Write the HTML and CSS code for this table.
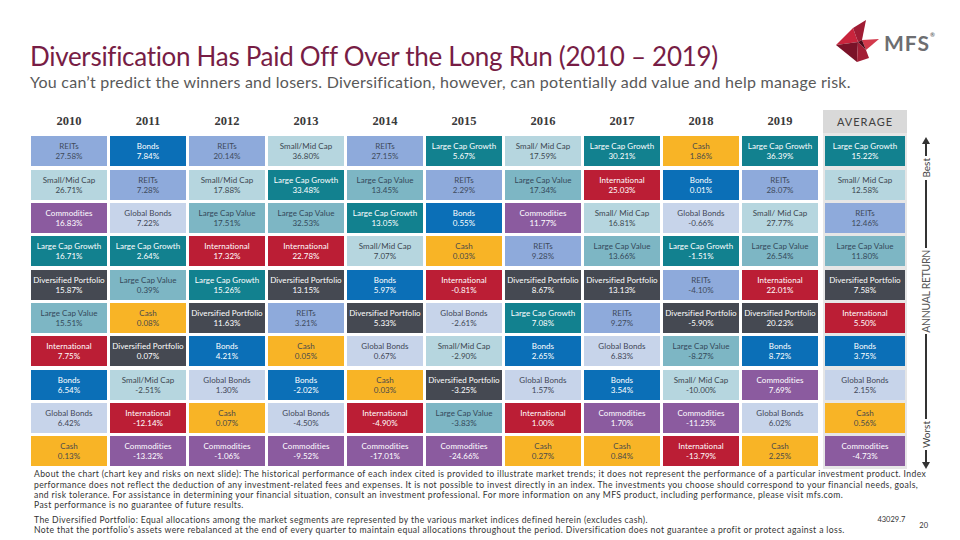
FILE: index.html
```html
<!DOCTYPE html>
<html lang="en">
<head>
<meta charset="utf-8">
<title>Diversification Has Paid Off Over the Long Run</title>
<link rel="stylesheet" href="styles.css">
</head>
<body>
<div class="slide">
  <header class="top">
    <h1>Diversification Has Paid Off Over the Long Run (2010 – 2019)</h1>
    <div class="logo">
      <svg class="mark" viewBox="0 0 44 42" width="44" height="42">
        <polygon points="0,25 17,8 22,22" fill="#c8243c"/>
        <polygon points="17,8 30,0 26,20 22,22" fill="#a01c34"/>
        <polygon points="26,20 43,19 30,30" fill="#d23a4c"/>
        <polygon points="0,25 22,22 21,42" fill="#7a1228"/>
        <polygon points="22,22 30,30 33,38 21,42" fill="#a31f36"/>
        <polygon points="22,22 26,20 30,30" fill="#4a0a1a"/>
      </svg>
      <span class="mfs">MFS<sup>®</sup></span>
    </div>
    <p class="sub">You can’t predict the winners and losers. Diversification, however, can potentially add value and help manage risk.</p>
  </header>

  <section class="chart">
    <div class="cols">
      <div class="col">
        <div class="yr">2010</div>
        <div class="cell reit">REITs<br>27.58%</div>
        <div class="cell smid">Small/Mid Cap<br>26.71%</div>
        <div class="cell comm">Commodities<br>16.83%</div>
        <div class="cell lcg">Large Cap Growth<br>16.71%</div>
        <div class="cell div">Diversified Portfolio<br>15.87%</div>
        <div class="cell lcv">Large Cap Value<br>15.51%</div>
        <div class="cell intl">International<br>7.75%</div>
        <div class="cell bond">Bonds<br>6.54%</div>
        <div class="cell gb">Global Bonds<br>6.42%</div>
        <div class="cell cash">Cash<br>0.13%</div>
      </div>
      <div class="col">
        <div class="yr">2011</div>
        <div class="cell bond">Bonds<br>7.84%</div>
        <div class="cell reit">REITs<br>7.28%</div>
        <div class="cell gb">Global Bonds<br>7.22%</div>
        <div class="cell lcg">Large Cap Growth<br>2.64%</div>
        <div class="cell lcv">Large Cap Value<br>0.39%</div>
        <div class="cell cash">Cash<br>0.08%</div>
        <div class="cell div">Diversified Portfolio<br>0.07%</div>
        <div class="cell smid">Small/Mid Cap<br>-2.51%</div>
        <div class="cell intl">International<br>-12.14%</div>
        <div class="cell comm">Commodities<br>-13.32%</div>
      </div>
      <div class="col">
        <div class="yr">2012</div>
        <div class="cell reit">REITs<br>20.14%</div>
        <div class="cell smid">Small/Mid Cap<br>17.88%</div>
        <div class="cell lcv">Large Cap Value<br>17.51%</div>
        <div class="cell intl">International<br>17.32%</div>
        <div class="cell lcg">Large Cap Growth<br>15.26%</div>
        <div class="cell div">Diversified Portfolio<br>11.63%</div>
        <div class="cell bond">Bonds<br>4.21%</div>
        <div class="cell gb">Global Bonds<br>1.30%</div>
        <div class="cell cash">Cash<br>0.07%</div>
        <div class="cell comm">Commodities<br>-1.06%</div>
      </div>
      <div class="col">
        <div class="yr">2013</div>
        <div class="cell smid">Small/Mid Cap<br>36.80%</div>
        <div class="cell lcg">Large Cap Growth<br>33.48%</div>
        <div class="cell lcv">Large Cap Value<br>32.53%</div>
        <div class="cell intl">International<br>22.78%</div>
        <div class="cell div">Diversified Portfolio<br>13.15%</div>
        <div class="cell reit">REITs<br>3.21%</div>
        <div class="cell cash">Cash<br>0.05%</div>
        <div class="cell bond">Bonds<br>-2.02%</div>
        <div class="cell gb">Global Bonds<br>-4.50%</div>
        <div class="cell comm">Commodities<br>-9.52%</div>
      </div>
      <div class="col">
        <div class="yr">2014</div>
        <div class="cell reit">REITs<br>27.15%</div>
        <div class="cell lcv">Large Cap Value<br>13.45%</div>
        <div class="cell lcg">Large Cap Growth<br>13.05%</div>
        <div class="cell smid">Small/Mid Cap<br>7.07%</div>
        <div class="cell bond">Bonds<br>5.97%</div>
        <div class="cell div">Diversified Portfolio<br>5.33%</div>
        <div class="cell gb">Global Bonds<br>0.67%</div>
        <div class="cell cash">Cash<br>0.03%</div>
        <div class="cell intl">International<br>-4.90%</div>
        <div class="cell comm">Commodities<br>-17.01%</div>
      </div>
      <div class="col">
        <div class="yr">2015</div>
        <div class="cell lcg">Large Cap Growth<br>5.67%</div>
        <div class="cell reit">REITs<br>2.29%</div>
        <div class="cell bond">Bonds<br>0.55%</div>
        <div class="cell cash">Cash<br>0.03%</div>
        <div class="cell intl">International<br>-0.81%</div>
        <div class="cell gb">Global Bonds<br>-2.61%</div>
        <div class="cell smid">Small/Mid Cap<br>-2.90%</div>
        <div class="cell div">Diversified Portfolio<br>-3.25%</div>
        <div class="cell lcv">Large Cap Value<br>-3.83%</div>
        <div class="cell comm">Commodities<br>-24.66%</div>
      </div>
      <div class="col">
        <div class="yr">2016</div>
        <div class="cell smid">Small/ Mid Cap<br>17.59%</div>
        <div class="cell lcv">Large Cap Value<br>17.34%</div>
        <div class="cell comm">Commodities<br>11.77%</div>
        <div class="cell reit">REITs<br>9.28%</div>
        <div class="cell div">Diversified Portfolio<br>8.67%</div>
        <div class="cell lcg">Large Cap Growth<br>7.08%</div>
        <div class="cell bond">Bonds<br>2.65%</div>
        <div class="cell gb">Global Bonds<br>1.57%</div>
        <div class="cell intl">International<br>1.00%</div>
        <div class="cell cash">Cash<br>0.27%</div>
      </div>
      <div class="col">
        <div class="yr">2017</div>
        <div class="cell lcg">Large Cap Growth<br>30.21%</div>
        <div class="cell intl">International<br>25.03%</div>
        <div class="cell smid">Small/ Mid Cap<br>16.81%</div>
        <div class="cell lcv">Large Cap Value<br>13.66%</div>
        <div class="cell div">Diversified Portfolio<br>13.13%</div>
        <div class="cell reit">REITs<br>9.27%</div>
        <div class="cell gb">Global Bonds<br>6.83%</div>
        <div class="cell bond">Bonds<br>3.54%</div>
        <div class="cell comm">Commodities<br>1.70%</div>
        <div class="cell cash">Cash<br>0.84%</div>
      </div>
      <div class="col">
        <div class="yr">2018</div>
        <div class="cell cash">Cash<br>1.86%</div>
        <div class="cell bond">Bonds<br>0.01%</div>
        <div class="cell gb">Global Bonds<br>-0.66%</div>
        <div class="cell lcg">Large Cap Growth<br>-1.51%</div>
        <div class="cell reit">REITs<br>-4.10%</div>
        <div class="cell div">Diversified Portfolio<br>-5.90%</div>
        <div class="cell lcv">Large Cap Value<br>-8.27%</div>
        <div class="cell smid">Small/ Mid Cap<br>-10.00%</div>
        <div class="cell comm">Commodities<br>-11.25%</div>
        <div class="cell intl">International<br>-13.79%</div>
      </div>
      <div class="col">
        <div class="yr">2019</div>
        <div class="cell lcg">Large Cap Growth<br>36.39%</div>
        <div class="cell reit">REITs<br>28.07%</div>
        <div class="cell smid">Small/ Mid Cap<br>27.77%</div>
        <div class="cell lcv">Large Cap Value<br>26.54%</div>
        <div class="cell intl">International<br>22.01%</div>
        <div class="cell div">Diversified Portfolio<br>20.23%</div>
        <div class="cell bond">Bonds<br>8.72%</div>
        <div class="cell comm">Commodities<br>7.69%</div>
        <div class="cell gb">Global Bonds<br>6.02%</div>
        <div class="cell cash">Cash<br>2.25%</div>
      </div>
      <div class="col avg">
        <div class="yr">AVERAGE</div>
        <div class="cell lcg">Large Cap Growth<br>15.22%</div>
        <div class="cell smid">Small/ Mid Cap<br>12.58%</div>
        <div class="cell reit">REITs<br>12.46%</div>
        <div class="cell lcv">Large Cap Value<br>11.80%</div>
        <div class="cell div">Diversified Portfolio<br>7.58%</div>
        <div class="cell intl">International<br>5.50%</div>
        <div class="cell bond">Bonds<br>3.75%</div>
        <div class="cell gb">Global Bonds<br>2.15%</div>
        <div class="cell cash">Cash<br>0.56%</div>
        <div class="cell comm">Commodities<br>-4.73%</div>
      </div>
    </div>

    <div class="axis">
      <div class="arrow up"></div>
      <div class="line l1"></div>
      <div class="lbl small">Best</div>
      <div class="line l2"></div>
      <div class="lbl big">ANNUAL RETURN</div>
      <div class="line l3"></div>
      <div class="lbl small">Worst</div>
      <div class="line l4"></div>
      <div class="arrow down"></div>
    </div>
  </section>

  <footer class="notes">
    <p class="p1">About the chart (chart key and risks on next slide): The historical performance of each index cited is provided to illustrate market trends; it does not represent the performance of a particular investment product. Index<br>performance does not reflect the deduction of any investment-related fees and expenses. It is not possible to invest directly in an index. The investments you choose should correspond to your financial needs, goals,<br>and risk tolerance. For assistance in determining your financial situation, consult an investment professional. For more information on any MFS product, including performance, please visit mfs.com.<br>Past performance is no guarantee of future results.</p>
    <p class="p2">The Diversified Portfolio: Equal allocations among the market segments are represented by the various market indices defined herein (excludes cash).<br>Note that the portfolio’s assets were rebalanced at the end of every quarter to maintain equal allocations throughout the period. Diversification does not guarantee a profit or protect against a loss.</p>
    <span class="code">43029.7</span>
    <span class="page">20</span>
  </footer>
</div>
</body>
</html>
```

FILE: styles.css
```css
html, body {
  margin: 0;
  padding: 0;
}
body {
  width: 960px;
  height: 540px;
  overflow: hidden;
  background: #ffffff;
  font-family: Lato, "Open Sans", sans-serif;
  font-variant-ligatures: none;
  color: #333;
}
.slide {
  padding: 20px 0 0 30px;
}

/* header */
.top {
  display: grid;
  grid-template-columns: 1fr auto;
}
.top h1 {
  grid-column: 1;
  grid-row: 1;
  margin: 20px 0 0 0;
  font-size: 26px;
  line-height: 32px;
  letter-spacing: -0.3px;
  font-weight: normal;
  color: #771d45;
  white-space: nowrap;
}
.logo {
  grid-column: 2;
  grid-row: 1;
  align-self: start;
  display: flex;
  align-items: center;
  gap: 4px;
  margin-right: 25px;
}
.mark {
  display: block;
}
.mfs {
  font-weight: bold;
  font-size: 21px;
  letter-spacing: 1px;
  color: #6d6e71;
  line-height: 1;
  margin-top: 3px;
}
.mfs sup {
  font-size: 6px;
  vertical-align: top;
  letter-spacing: 0;
}
.sub {
  grid-column: 1 / -1;
  grid-row: 2;
  margin: 0;
  font-size: 16px;
  line-height: 20px;
  letter-spacing: 0.25px;
  color: #595959;
  white-space: nowrap;
}

/* chart */
.chart {
  display: flex;
  margin: 18px 0 0 1px;
}
.cols {
  display: flex;
  gap: 3px;
}
.col {
  width: 76px;
  display: flex;
  flex-direction: column;
  gap: 3.33px;
}
.yr {
  height: 23px;
  display: flex;
  align-items: center;
  justify-content: center;
  font-family: "Liberation Serif", serif;
  font-weight: bold;
  font-size: 12.5px;
  color: #3a3a3a;
}
.col.avg {
  width: 80px;
  margin-left: 2px;
  padding: 0 2px 1px;
  background: #e6e6e6;
}
.col.avg .yr {
  margin: 0 -2px;
  background: #d9d9d9;
  font-family: Lato, sans-serif;
  font-weight: normal;
  font-size: 11px;
  letter-spacing: 1px;
  color: #404040;
}
.cell {
  height: 30px;
  display: flex;
  flex-direction: column;
  align-items: center;
  justify-content: center;
  text-align: center;
  font-size: 8px;
  line-height: 10px;
  letter-spacing: 0.05px;
  white-space: nowrap;
}
.reit { background: #8eaadb; color: #3f4a5c; }
.bond { background: #0b6fb7; color: #ffffff; }
.smid { background: #b6d6df; color: #3c4650; }
.lcg  { background: #12818f; color: #ffffff; }
.lcv  { background: #7db6c4; color: #34495a; }
.comm { background: #8b5b9f; color: #ffffff; }
.gb   { background: #c7d4ea; color: #3f4656; }
.intl { background: #bb1e35; color: #ffffff; }
.div  { background: #454952; color: #ffffff; }
.cash { background: #f8b426; color: #4a4a4a; }

/* axis */
.axis {
  width: 20px;
  margin-left: 9px;
  padding-top: 27px;
  display: flex;
  flex-direction: column;
  align-items: center;
}
.arrow {
  width: 0;
  height: 0;
  border-left: 4px solid transparent;
  border-right: 4px solid transparent;
}
.arrow.up { border-bottom: 7px solid #333; }
.arrow.down { border-top: 7px solid #333; }
.line {
  width: 2px;
  background: #333;
}
.l1 { height: 12px; }
.l2 { height: 68px; }
.l3 { height: 85px; }
.l4 { height: 12px; }
.lbl {
  writing-mode: vertical-rl;
  transform: rotate(180deg);
  padding: 2px 0;
  color: #404040;
}
.lbl.small {
  font-size: 10px;
  line-height: 12px;
}
.lbl.big {
  font-size: 10.5px;
  line-height: 14px;
  letter-spacing: -0.3px;
  color: #555;
}

/* footer */
.notes {
  display: grid;
  grid-template-columns: 1fr auto auto;
  margin: 0 0 0 4px;
  font-size: 8.6px;
  line-height: 10.3px;
  letter-spacing: 0.38px;
  color: #333;
  white-space: nowrap;
}
.notes p {
  margin: 0;
}
.p1 {
  grid-column: 1 / -1;
  margin-bottom: 4px !important;
}
.p2 {
  grid-column: 1;
}
.code {
  grid-column: 2;
  font-size: 7.5px;
  letter-spacing: 0;
  margin-right: 14px;
  align-self: start;
}
.page {
  grid-column: 3;
  font-size: 7.5px;
  letter-spacing: 0;
  margin-top: 6px;
  margin-right: 32px;
  align-self: start;
}
```
